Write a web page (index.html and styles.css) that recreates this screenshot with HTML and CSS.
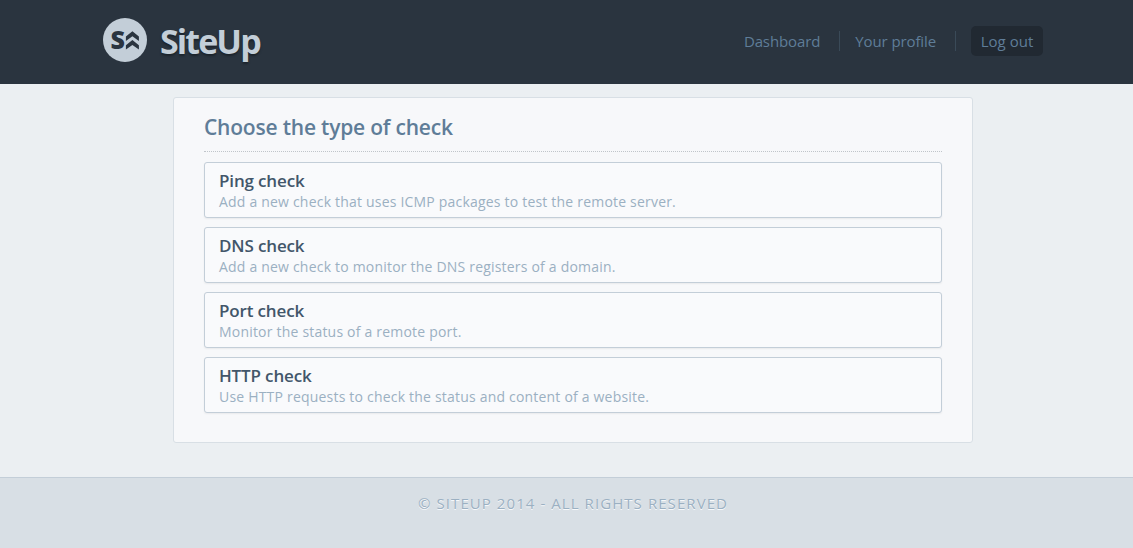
FILE: index.html
```html
<!DOCTYPE html>
<html lang="en">
<head>
<meta charset="utf-8">
<title>SiteUp</title>
<link rel="stylesheet" href="styles.css">
</head>
<body>
<header class="header">
  <div class="header-inner">
    <a class="brand">
      <svg class="logo" width="44" height="44" viewBox="0 0 44 44">
        <circle cx="22" cy="22" r="22" fill="#c3ced8"/>
        <text class="logo-letter" x="7.6" y="31.3">S</text>
        <path d="M22.9 18.6 29.4 13.2 35.9 18.6V22.9L29.4 18.3 22.9 22.9ZM22.9 27.3 29.4 21.9 35.9 27.3V31.6L29.4 27 22.9 31.6Z" fill="#2a343f"/>
      </svg>
      <span class="brand-name">SiteUp</span>
    </a>
    <nav class="nav">
      <a class="nav-link">Dashboard</a>
      <a class="nav-link">Your profile</a>
      <a class="nav-button">Log out</a>
    </nav>
  </div>
</header>
<main class="panel">
  <h1 class="panel-title">Choose the type of check</h1>
  <div class="checks">
    <a class="check"><strong class="check-name">Ping check</strong><span class="check-text">Add a new check that uses ICMP packages to test the remote server.</span></a>
    <a class="check"><strong class="check-name">DNS check</strong><span class="check-text">Add a new check to monitor the DNS registers of a domain.</span></a>
    <a class="check"><strong class="check-name">Port check</strong><span class="check-text">Monitor the status of a remote port.</span></a>
    <a class="check"><strong class="check-name">HTTP check</strong><span class="check-text">Use HTTP requests to check the status and content of a website.</span></a>
  </div>
</main>
<footer class="footer">© SiteUp 2014 - All rights reserved</footer>
</body>
</html>
```
FILE: styles.css
```css
* { box-sizing: border-box; }
html, body { height: 100%; }
body {
  margin: 0;
  display: flex;
  flex-direction: column;
  background: #ebeff2;
  font-family: "Open Sans", "Noto Sans", sans-serif;
  font-size: 15px;
  overflow: hidden;
}
.header { height: 84px; flex: none; background: #2a343f; padding-left: 13px; }
.header-inner {
  width: 940px;
  height: 84px;
  margin: 0 auto 0 90px;
  display: flex;
  justify-content: space-between;
}
.brand { display: flex; gap: 13px; padding-top: 18px; }
.logo-letter { font: 800 25px "Open Sans", sans-serif; fill: #2a343f; }
.brand-name {
  font-size: 34px;
  line-height: 46px;
  font-weight: 700;
  letter-spacing: -1.9px;
  color: #c3ced8;
  text-shadow: 0 2px 2px #1c242c;
}
.nav { display: flex; align-items: flex-start; padding-top: 26px; color: #5f7d98; line-height: 30px; }
.nav-link { display: flex; align-items: center; letter-spacing: -0.11px; }
.nav-link::after { content: ""; width: 1px; height: 20px; margin: 0 15px 0 19px; background: #3a4a58; }
.nav-button { width: 72px; height: 30px; text-align: center; border-radius: 5px; background: #212932; }
.panel {
  width: 800px;
  height: 346px;
  flex: none;
  margin: 13px 0 0 173px;
  padding: 14px 30px 0;
  background: #f7f8fa;
  border: 1px solid #d8dfe5;
  border-radius: 3px;
}
.panel-title {
  margin: 0 0 10px;
  height: 40px;
  border-bottom: 1px dotted #c0c5ca;
  color: #5f7d98;
  font-size: 21px;
  font-weight: 600;
  line-height: 31px;
  letter-spacing: -0.2px;
}
.checks { display: flex; flex-direction: column; gap: 9px; }
.check {
  display: flex;
  flex-direction: column;
  height: 56px;
  padding: 7px 14px 0;
  background: #f9fafc;
  border: 1px solid #c3ced8;
  border-radius: 3px;
  box-shadow: 0 1px 2px rgba(0, 0, 0, 0.06);
}
.check-name { color: #42566a; font-size: 17px; font-weight: 600; line-height: 21px; letter-spacing: -0.15px; }
.check-text { color: #9bb0c2; font-size: 14px; line-height: 22px; letter-spacing: 0.2px; }
.footer {
  flex: 1;
  margin-top: 34px;
  padding: 15px 0 0 13px;
  border-top: 1px solid #c3ced8;
  background: #d8dfe5;
  color: #9bb0c2;
  text-align: center;
  text-transform: uppercase;
  letter-spacing: 1.07px;
  line-height: 20px;
  text-shadow: 0 1px 0 #f7f9fb;
}
```
